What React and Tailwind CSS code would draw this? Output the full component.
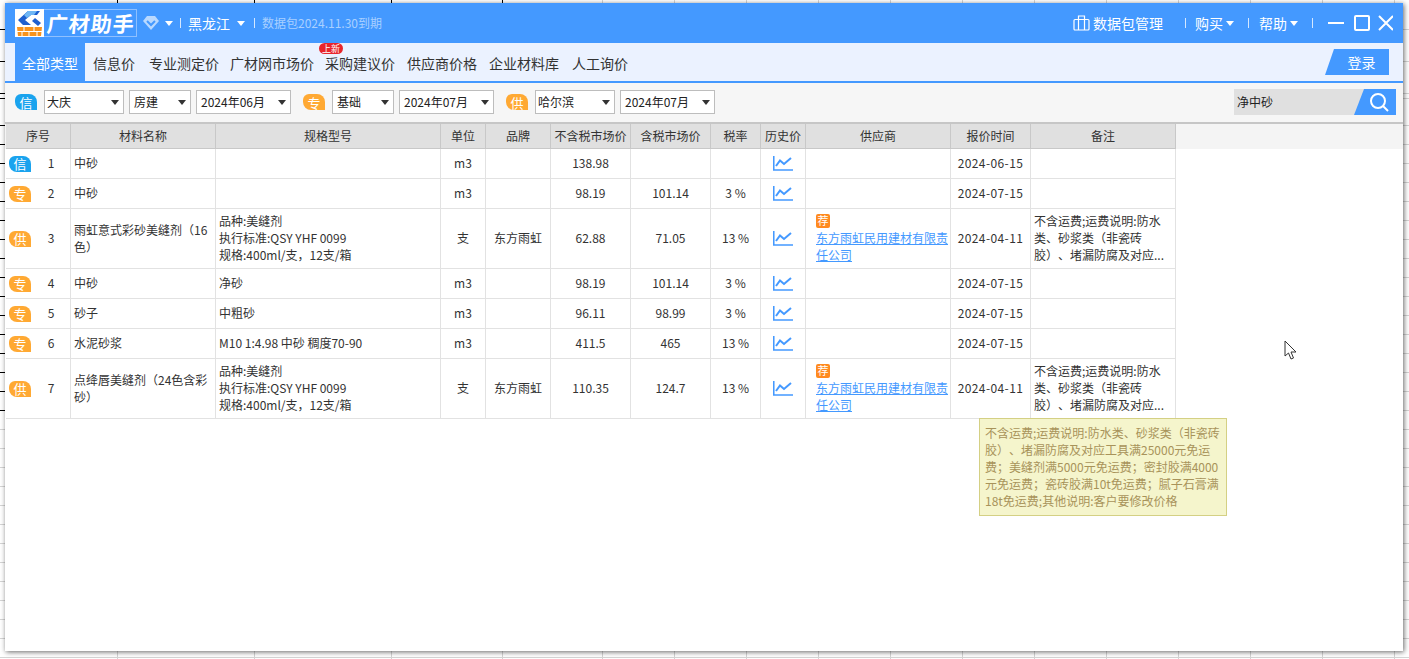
const FONT = { fontFamily: '"Noto Sans CJK SC", "Noto Sans", sans-serif' }

const V_LINES = [117, 254, 391, 502, 602, 674, 746, 818, 890, 962, 1034, 1106, 1178, 1250, 1322, 1394]
const H_LINES = [29, 61, 93, 98, 125, 144, 163, 182, 201, 220, 239, 258, 277, 296, 315, 334, 353, 372, 391, 410, 429, 448, 467, 486, 505, 524, 543, 562, 581, 600, 619, 638, 657]

const COLS = [65, 145, 225, 45, 65, 80, 80, 50, 45, 145, 80, 145]
const HEADERS = ['序号', '材料名称', '规格型号', '单位', '品牌', '不含税市场价', '含税市场价', '税率', '历史价', '供应商', '报价时间', '备注']

const SPEC = ['品种:美缝剂', '执行标准:QSY YHF 0099', '规格:400ml/支，12支/箱']
const NOTE = ['不含运费;运费说明:防水', '类、砂浆类（非瓷砖', '胶）、堵漏防腐及对应...']

const ROWS = [
  { tag: '信', n: 1, name: '中砂', unit: 'm3', ex: '138.98', date: '2024-06-15' },
  { tag: '专', n: 2, name: '中砂', unit: 'm3', ex: '98.19', inc: '101.14', tax: '3 %', date: '2024-07-15' },
  { tag: '供', n: 3, name: '雨虹意式彩砂美缝剂（16色）', spec: SPEC, unit: '支', brand: '东方雨虹', ex: '62.88', inc: '71.05', tax: '13 %', supplier: true, date: '2024-04-11', note: NOTE },
  { tag: '专', n: 4, name: '中砂', spec: ['净砂'], unit: 'm3', ex: '98.19', inc: '101.14', tax: '3 %', date: '2024-07-15' },
  { tag: '专', n: 5, name: '砂子', spec: ['中粗砂'], unit: 'm3', ex: '96.11', inc: '98.99', tax: '3 %', date: '2024-07-15' },
  { tag: '专', n: 6, name: '水泥砂浆', spec: ['M10 1:4.98 中砂 稠度70-90'], unit: 'm3', ex: '411.5', inc: '465', tax: '13 %', date: '2024-07-15' },
  { tag: '供', n: 7, name: '点绛唇美缝剂（24色含彩砂）', spec: SPEC, unit: '支', brand: '东方雨虹', ex: '110.35', inc: '124.7', tax: '13 %', supplier: true, date: '2024-04-11', note: NOTE },
]

const TOOLTIP = [
  '不含运费;运费说明:防水类、砂浆类（非瓷砖',
  '胶）、堵漏防腐及对应工具满25000元免运',
  '费；美缝剂满5000元免运费；密封胶满4000',
  '元免运费；瓷砖胶满10t免运费；腻子石膏满',
  '18t免运费;其他说明:客户要修改价格',
]

function Backdrop() {
  return (
    <div className="absolute inset-0">
      {V_LINES.map((x, i) => (
        <div key={x} className="absolute top-0 h-full w-px bg-[#d4d4d4]" style={{ left: x }}>
          {i < 4 && <div className="h-[3px] w-px bg-black" />}
        </div>
      ))}
      {H_LINES.map((y, i) => (
        <div key={y} className="absolute left-0 h-px w-full bg-[#d4d4d4]" style={{ top: y }}>
          {i < 20 && <div className="h-px w-[5px] bg-black" />}
        </div>
      ))}
    </div>
  )
}

function Logo() {
  return (
    <div className="flex h-[28px] items-stretch border border-[#8fc0ff]">
      <svg width="29" height="28" viewBox="0 0 29 28" className="-my-px -ml-px h-[28px] shrink-0 bg-white">
        <path d="M13 2 H25 L22 6 H16 L10 11 L16 16 H8 L3 11 Z" fill="#1d5fd0" />
        <path d="M13 2 H22 L19 6 H16 L12 9 L9 6 Z" fill="#6fb7f5" />
        <path d="M20 9 L26 14 L23 17 L17 12 Z" fill="#1d5fd0" />
        <path d="M2 18 H27 L26 27 H3 Z" fill="#f7931e" />
        <path d="M2 22.5 H27 M9 18 V22.5 M19 18 V22.5 M7 22.5 V27 M14 22.5 V27 M22 22.5 V27" stroke="#fff" strokeWidth="1" fill="none" />
      </svg>
      <span className="ml-[3px] w-[89px] -skew-x-6 text-[21px] leading-[26px] font-bold tracking-[1px] whitespace-nowrap text-white">
        广材助手
      </span>
    </div>
  )
}

function Caret({ color = 'border-t-white', className = '' }) {
  return <span className={`inline-block h-0 w-0 border-x-[4px] border-t-[5px] border-x-transparent ${color} ${className}`} />
}

function Sep({ className = '' }) {
  return <span className={`h-[10px] w-px bg-[#d5e8ff] ${className}`} />
}

function TitleBar() {
  return (
    <div className="flex h-[40px] items-center bg-[#4499ff] pl-[10px] text-white">
      <Logo />
      <svg width="18" height="18" viewBox="0 0 18 18" className="ml-[5px]">
        <path d="M5 2 H13 L17 7 L9 16 L1 7 Z" fill="#b9d9ff" />
        <path d="M5 7 L9 11 L13 7" fill="none" stroke="#4499ff" strokeWidth="2" />
      </svg>
      <Caret className="ml-[5px]" />
      <Sep className="ml-[7px]" />
      <span className="ml-[7px] text-sm leading-none">黑龙江</span>
      <Caret className="ml-[7px]" />
      <Sep className="ml-[9px]" />
      <span className="ml-[7px] text-xs text-[#a9d0ff]">数据包2024.11.30到期</span>
      <div className="ml-auto flex items-center">
        <svg width="17" height="16" viewBox="0 0 17 16" fill="none" stroke="#fff" strokeWidth="1.2">
          <rect x="1" y="4.5" width="15" height="10.5" rx="1" />
          <path d="M5.5 4.5 V1 H11.5 V4.5 M5.5 4.5 V15 M11.5 4.5 V15" />
        </svg>
        <span className="ml-[3px] text-sm">数据包管理</span>
        <Sep className="ml-[22px]" />
        <span className="ml-[9px] text-sm">购买</span>
        <Caret className="ml-[3px]" />
        <Sep className="ml-[14px]" />
        <span className="ml-[10px] text-sm">帮助</span>
        <Caret className="ml-[3px]" />
        <Sep className="ml-[14px]" />
        <svg width="65" height="16" viewBox="0 0 65 16" fill="none" stroke="#fff" className="mr-[10px] ml-[15px]">
          <path d="M0 8 H16" strokeWidth="2" />
          <rect x="27" y="1" width="14" height="14" rx="1" strokeWidth="2" />
          <path d="M51 1 L65 15 M65 1 L51 15" strokeWidth="2" />
        </svg>
      </div>
    </div>
  )
}

function NavBar() {
  const items = [
    ['信息价', 'ml-[8px]'],
    ['专业测定价', 'ml-[14px]'],
    ['广材网市场价', 'ml-[11px]'],
    ['采购建议价', 'ml-[11px]'],
    ['供应商价格', 'ml-[12px]'],
    ['企业材料库', 'ml-[12px]'],
    ['人工询价', 'ml-[13px]'],
  ]
  return (
    <div className="flex h-[40px] border-b-2 border-[#4499ff] bg-[#ebf2ff] pl-[10px] text-sm text-[#333]">
      <div className="flex w-[70px] items-center justify-center bg-[#4499ff] pt-[2px] text-white">全部类型</div>
      {items.map(([label, ml]) => (
        <div key={label} className={`relative flex items-center pt-[2px] whitespace-nowrap ${ml}`}>
          {label}
          {label === '采购建议价' && (
            <span className="absolute top-0 left-[-6px] flex h-[11px] w-[24px] items-center justify-center rounded-full bg-[#e8262c] text-[9px] leading-none text-white">
              上新
            </span>
          )}
        </div>
      ))}
      <div className="mt-[6px] mr-[14px] ml-auto flex h-[26px] w-[64px] items-center justify-center bg-[#4499ff] pl-[9px] text-white [clip-path:polygon(9px_0,100%_0,100%_100%,0_100%)]">
        登录
      </div>
    </div>
  )
}

function Tag({ label, className = '' }) {
  const color = label === '信' ? 'bg-[#1aa3ee]' : 'bg-[#ffa933]'
  return (
    <span className={`flex h-[16px] w-[22px] shrink-0 items-center justify-center rounded-tl-[6px] rounded-tr-[8px] rounded-bl-[8px] text-[13px] leading-none text-white ${color} ${className}`}>
      {label}
    </span>
  )
}

function Select({ value, width, pad = 'pl-[2px]' }) {
  return (
    <div className={`flex h-[24px] items-center justify-between border border-[#bdbdbd] bg-white pr-[4px] text-xs text-[#222] ${pad} ${width}`}>
      <span>{value}</span>
      <Caret color="border-t-[#333]" />
    </div>
  )
}

function FilterBar() {
  return (
    <div className="flex h-[41px] items-center border-b-2 border-[#c6c6c6] bg-[#f6f6f6] pb-px pl-[10px]">
      <Tag label="信" />
      <div className="ml-[7px] flex gap-[5px]">
        <Select value="大庆" width="w-[80px]" />
        <Select value="房建" width="w-[62px]" pad="pl-[4px]" />
        <Select value="2024年06月" width="w-[95px]" pad="pl-[4px]" />
      </div>
      <Tag label="专" className="ml-[12px]" />
      <div className="ml-[7px] flex gap-[5px]">
        <Select value="基础" width="w-[62px]" pad="pl-[4px]" />
        <Select value="2024年07月" width="w-[95px]" pad="pl-[4px]" />
      </div>
      <Tag label="供" className="ml-[12px]" />
      <div className="ml-[7px] flex gap-[5px]">
        <Select value="哈尔滨" width="w-[80px]" />
        <Select value="2024年07月" width="w-[95px]" pad="pl-[4px]" />
      </div>
      <div className="mr-[7px] ml-auto flex h-[26px] w-[162px] bg-[#e0e0e0]">
        <span className="pl-[3px] text-xs leading-[26px] text-[#222]">净中砂</span>
        <div className="ml-auto flex w-[42px] items-center justify-center bg-[#4499ff] pl-[8px] [clip-path:polygon(10px_0,100%_0,100%_100%,0_100%)]">
          <svg width="20" height="20" viewBox="0 0 20 20" fill="none" stroke="#fff" strokeWidth="2">
            <circle cx="9" cy="9" r="7" />
            <path d="M14 14 L19 19" />
          </svg>
        </div>
      </div>
    </div>
  )
}

function ChartIcon() {
  return (
    <svg width="20" height="15" viewBox="0 0 20 15" fill="none" stroke="#4499ff" className="relative top-px mx-auto block">
      <path d="M0.75 0 V14 H20" strokeWidth="1.6" />
      <path d="M3 10 L7 4.5 L11 8 L18 2" strokeWidth="2" />
    </svg>
  )
}

function Cell({ className = '', children }) {
  return <td className={`border-r border-b border-[#e2e2e2] p-0 pb-[2px] align-middle ${className}`}>{children}</td>
}

function Row({ row }) {
  const height = row.spec?.length > 1 ? 'h-[60px]' : 'h-[30px]'
  return (
    <tr className={height}>
      <Cell>
        <div className="flex items-center pl-[3px]">
          <Tag label={row.tag} className="relative top-px" />
          <span className="flex-1 pl-px text-center">{row.n}</span>
        </div>
      </Cell>
      <Cell className="px-[3px]">{row.name}</Cell>
      <Cell className="px-[3px] whitespace-nowrap">
        {row.spec?.map((line) => <div key={line}>{line}</div>)}
      </Cell>
      <Cell className="text-center">{row.unit}</Cell>
      <Cell className="text-center">{row.brand}</Cell>
      <Cell className="text-center">{row.ex}</Cell>
      <Cell className="text-center">{row.inc}</Cell>
      <Cell className="text-center">{row.tax}</Cell>
      <Cell><ChartIcon /></Cell>
      <Cell className="pl-[10px]">
        {row.supplier && (
          <>
            <span className="relative top-px mb-[2px] flex h-[14px] w-[14px] items-center justify-center rounded-[2px] bg-[#ff8a1e] text-[11px] leading-none text-white">荐</span>
            <a className="block w-[133px] text-[#4499ff] underline">东方雨虹民用建材有限责任公司</a>
          </>
        )}
      </Cell>
      <Cell className="text-center tracking-[0.4px]">{row.date}</Cell>
      <Cell className="px-[3px] whitespace-nowrap">
        {row.note?.map((line) => <div key={line}>{line}</div>)}
      </Cell>
    </tr>
  )
}

function PriceTable() {
  return (
    <div className="relative flex-1 bg-white text-xs leading-[17px] text-[#333]">
      <div className="absolute top-0 right-0 left-0 h-[25px] bg-[#f4f4f4]" />
      <table className="relative ml-px w-[1170px] table-fixed border-separate border-spacing-0">
        <colgroup>
          {COLS.map((w, i) => <col key={i} style={{ width: w }} />)}
        </colgroup>
        <thead>
          <tr className="h-[25px]">
            {HEADERS.map((h) => (
              <th key={h} className="border-r border-b border-[#c8c8c8] bg-[#e0e0e0] p-0 pb-[2px] text-center font-normal whitespace-nowrap">
                {h}
              </th>
            ))}
          </tr>
        </thead>
        <tbody>
          {ROWS.map((row) => <Row key={row.n} row={row} />)}
        </tbody>
      </table>
      {/* tooltip of the note cell */}
      <div className="absolute top-[294px] left-[974px] h-[98px] w-[248px] border border-[#d4d084] bg-[#f5f5cc] p-[5px] whitespace-nowrap text-[#a8935a]">
        {TOOLTIP.map((line) => <div key={line}>{line}</div>)}
      </div>
      {/* mouse pointer */}
      <svg width="14" height="21" viewBox="0 0 14 21" className="absolute top-[216px] left-[1279px]">
        <path d="M1 1 V16 L4.5 13 L7 19 L9.5 18 L7 12 H12 Z" fill="#fff" stroke="#333" strokeWidth="1" />
      </svg>
    </div>
  )
}

export default function App() {
  return (
    <div className="relative h-[659px] w-[1409px] overflow-hidden bg-white pt-[3px] pl-[5px] [text-spacing-trim:space-all]" style={FONT}>
      <Backdrop />
      <div className="relative flex h-[648px] w-[1398px] flex-col bg-white shadow-[1px_1px_5px_rgba(0,0,0,0.6)]">
        <TitleBar />
        <NavBar />
        <FilterBar />
        <PriceTable />
      </div>
    </div>
  )
}
